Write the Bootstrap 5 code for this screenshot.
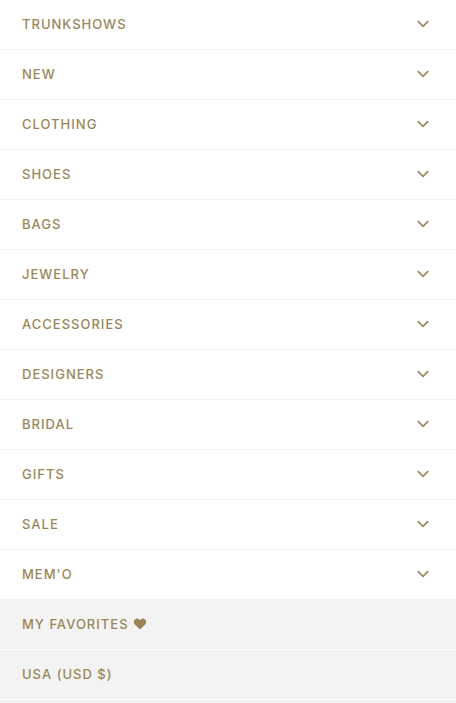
<!DOCTYPE html>
<html lang="en">
<head>
<meta charset="utf-8">
<meta name="viewport" content="width=device-width, initial-scale=1">
<title>Menu</title>
<link href="https://cdn.jsdelivr.net/npm/bootstrap@5.3.0/dist/css/bootstrap.min.css" rel="stylesheet">
<style>
body { font-family: Inter, "Liberation Sans", sans-serif; background: #fff; }
.menu-item, .menu-item:hover {
  min-height: 50px; padding: 0 27px 1px 22px; border-bottom: 1px solid #f2f2f2 !important;
  color: #9b8658; font-size: 13px; font-weight: 500; line-height: 18px; letter-spacing: 1px;
}
.menu-extra { background: #f3f3f3; }
.menu-extra .menu-item { border-bottom-color: #fff !important; }
.menu-extra .favorites-link { padding-bottom: 2px; }
</style>
</head>
<body>
<nav class="d-flex flex-column min-vh-100" aria-label="Main menu">
  <svg class="d-none" aria-hidden="true">
    <symbol id="chevron" viewBox="0 0 12 8"><path d="M.8 1.200 6 6.400 11.200 1.200" fill="none" stroke="currentColor" stroke-width="1.7"/></symbol>
  </svg>
  <ul class="list-unstyled mb-0">
    <li><button type="button" class="menu-item btn rounded-0 border-0 w-100 d-flex align-items-center justify-content-between" aria-expanded="false">TRUNKSHOWS<svg width="12" height="8" aria-hidden="true"><use href="#chevron"/></svg></button></li>
    <li><button type="button" class="menu-item btn rounded-0 border-0 w-100 d-flex align-items-center justify-content-between" aria-expanded="false">NEW<svg width="12" height="8" aria-hidden="true"><use href="#chevron"/></svg></button></li>
    <li><button type="button" class="menu-item btn rounded-0 border-0 w-100 d-flex align-items-center justify-content-between" aria-expanded="false">CLOTHING<svg width="12" height="8" aria-hidden="true"><use href="#chevron"/></svg></button></li>
    <li><button type="button" class="menu-item btn rounded-0 border-0 w-100 d-flex align-items-center justify-content-between" aria-expanded="false">SHOES<svg width="12" height="8" aria-hidden="true"><use href="#chevron"/></svg></button></li>
    <li><button type="button" class="menu-item btn rounded-0 border-0 w-100 d-flex align-items-center justify-content-between" aria-expanded="false">BAGS<svg width="12" height="8" aria-hidden="true"><use href="#chevron"/></svg></button></li>
    <li><button type="button" class="menu-item btn rounded-0 border-0 w-100 d-flex align-items-center justify-content-between" aria-expanded="false">JEWELRY<svg width="12" height="8" aria-hidden="true"><use href="#chevron"/></svg></button></li>
    <li><button type="button" class="menu-item btn rounded-0 border-0 w-100 d-flex align-items-center justify-content-between" aria-expanded="false">ACCESSORIES<svg width="12" height="8" aria-hidden="true"><use href="#chevron"/></svg></button></li>
    <li><button type="button" class="menu-item btn rounded-0 border-0 w-100 d-flex align-items-center justify-content-between" aria-expanded="false">DESIGNERS<svg width="12" height="8" aria-hidden="true"><use href="#chevron"/></svg></button></li>
    <li><button type="button" class="menu-item btn rounded-0 border-0 w-100 d-flex align-items-center justify-content-between" aria-expanded="false">BRIDAL<svg width="12" height="8" aria-hidden="true"><use href="#chevron"/></svg></button></li>
    <li><button type="button" class="menu-item btn rounded-0 border-0 w-100 d-flex align-items-center justify-content-between" aria-expanded="false">GIFTS<svg width="12" height="8" aria-hidden="true"><use href="#chevron"/></svg></button></li>
    <li><button type="button" class="menu-item btn rounded-0 border-0 w-100 d-flex align-items-center justify-content-between" aria-expanded="false">SALE<svg width="12" height="8" aria-hidden="true"><use href="#chevron"/></svg></button></li>
    <li><button type="button" class="menu-item btn rounded-0 border-0 w-100 d-flex align-items-center justify-content-between" aria-expanded="false">MEM'O<svg width="12" height="8" aria-hidden="true"><use href="#chevron"/></svg></button></li>
  </ul>
  <ul class="menu-extra list-unstyled mb-0 flex-grow-1">
    <li><a href="#favorites" class="menu-item favorites-link d-flex align-items-center gap-1 text-decoration-none">MY FAVORITES<svg width="14" height="12" viewBox="0 0 13 12" aria-hidden="true"><path d="M6.5 11.6 1.3 6.6C-.2 5 .1 2.300 1.600 1.200 3.200.1 5.200.5 6.500 2.200 7.800.5 9.800.1 11.400 1.200 12.900 2.300 13.200 5 11.700 6.600Z" fill="currentColor"/></svg></a></li>
    <li><a href="#currency" class="menu-item d-flex align-items-center text-decoration-none">USA (USD $)</a></li>
  </ul>
</nav>
<script src="https://cdn.jsdelivr.net/npm/bootstrap@5.3.0/dist/js/bootstrap.bundle.min.js"></script>
</body>
</html>
